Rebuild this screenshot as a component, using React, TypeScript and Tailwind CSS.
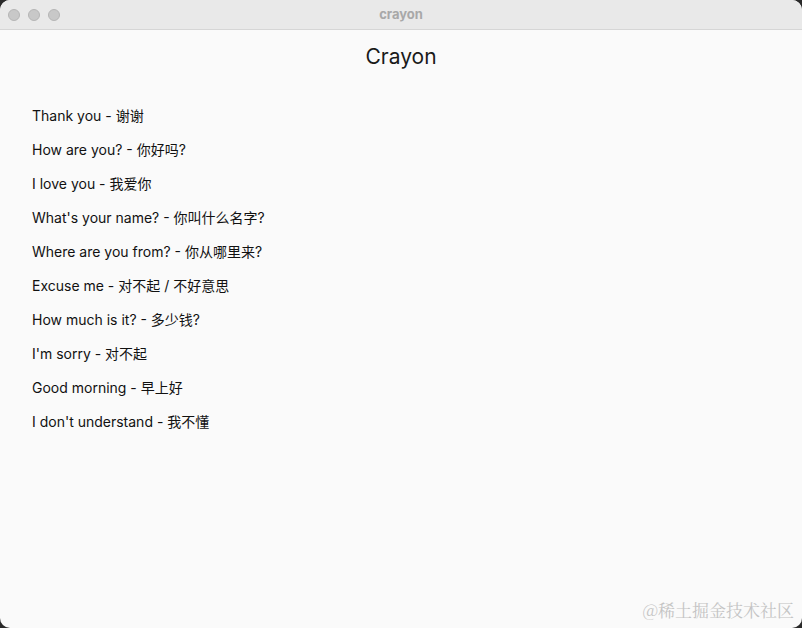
const phrases = [
  'Thank you - 谢谢',
  'How are you? - 你好吗?',
  'I love you - 我爱你',
  "What's your name? - 你叫什么名字?",
  'Where are you from? - 你从哪里来?',
  'Excuse me - 对不起 / 不好意思',
  'How much is it? - 多少钱?',
  "I'm sorry - 对不起",
  'Good morning - 早上好',
  "I don't understand - 我不懂",
];

export default function App() {
  return (
    <div className="w-[802px] h-[628px] bg-[#2a2a2a] overflow-hidden" style={{ fontFamily: 'Inter, "Noto Sans CJK SC", sans-serif' }}>
      <div className="w-full h-full rounded-[10px] bg-[#fafafa] flex flex-col overflow-hidden relative">
        <div className="h-[30px] shrink-0 bg-[#e9e9e9] border-b border-[#d6d6d6] flex items-center relative">
          <div className="flex gap-[8px] pl-[8px]">
            <span className="w-[12px] h-[12px] rounded-full bg-[#c8c8c8] border border-[#b5b5b5]" />
            <span className="w-[12px] h-[12px] rounded-full bg-[#c8c8c8] border border-[#b5b5b5]" />
            <span className="w-[12px] h-[12px] rounded-full bg-[#c8c8c8] border border-[#b5b5b5]" />
          </div>
          <div className="absolute inset-0 flex items-center justify-center text-[13px] font-bold text-[#a8a8a8]">crayon</div>
        </div>
        <div className="flex-1 flex flex-col">
          <h1 className="text-center text-[21px] text-[#1a1a1a] mt-[14px] leading-[26px]">Crayon</h1>
          <ul className="flex flex-col gap-[14px] pl-[32px] mt-[36px]">
            {phrases.map(p => (
              <li key={p} className="text-[14px] leading-[20px] text-[#111]">{p}</li>
            ))}
          </ul>
        </div>
        <div className="absolute right-[8px] bottom-[6px] text-[17px] text-[#c4c4c4]" style={{ fontFamily: '"Noto Serif CJK SC", "Noto Sans CJK SC", serif' }}>@稀土掘金技术社区</div>
      </div>
    </div>
  );
}
